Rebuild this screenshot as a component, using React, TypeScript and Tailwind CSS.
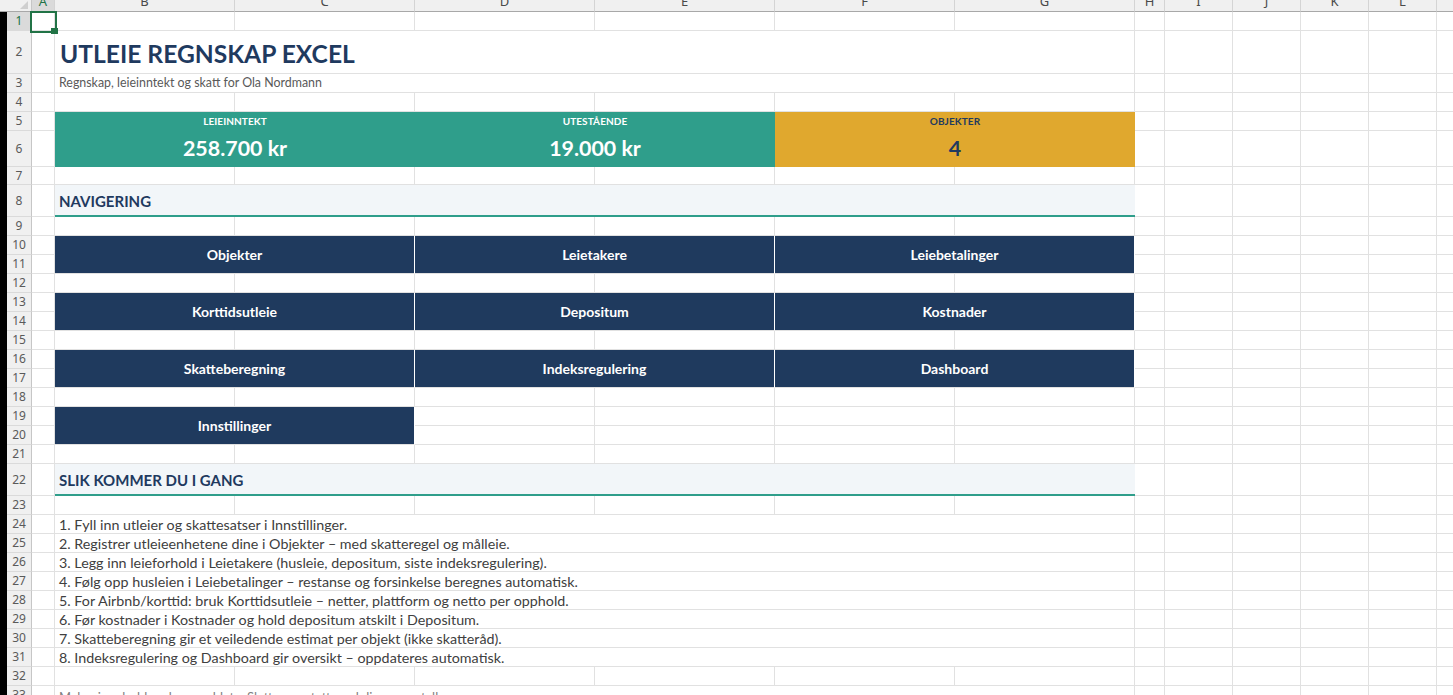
import React from "react";

const FONT = "font-['Lato','Open_Sans',sans-serif]";
const GRID = "border-r border-b border-[#e1e1e1]";
const COLS = ["A", "B", "C", "D", "E", "F", "G", "H", "I", "J", "K", "L", "M"];

function RowHdr({ n, sel }: { n: number; sel?: boolean }) {
  return (
    <div
      className={`${
        sel ? "bg-[#dadada] text-[#217346]" : "bg-[#f0f0f0] text-[#5a5a5a]"
      } border-r border-r-[#c6c6c6] border-b border-b-[#dadada] flex items-center justify-center text-[12px] font-['Noto_Sans',sans-serif]`}
    >
      {n}
    </div>
  );
}

function Blank() {
  return <div className={GRID} />;
}

function Right() {
  return (
    <>
      <Blank />
      <Blank />
      <Blank />
      <Blank />
      <Blank />
      <Blank />
    </>
  );
}

function BtoG() {
  return (
    <>
      <Blank />
      <Blank />
      <Blank />
      <Blank />
      <Blank />
      <Blank />
    </>
  );
}

function NormalRow({ n }: { n: number }) {
  return (
    <>
      <RowHdr n={n} />
      <Blank />
      <BtoG />
      <Right />
    </>
  );
}

function Kpi({
  label,
  value,
  gold,
}: {
  label: string;
  value: string;
  gold?: boolean;
}) {
  return (
    <div
      className={`col-span-2 row-span-2 flex flex-col items-center ${
        gold ? "bg-[#e0a82e] text-[#1f3a5f]" : "bg-[#2f9e8b] text-white"
      }`}
    >
      <div className="h-[19px] flex items-center text-[10px] font-bold tracking-[0.1px]">
        {label}
      </div>
      <div className="flex-1 flex items-center text-[21.4px] font-bold pb-[1px]">
        {value}
      </div>
    </div>
  );
}

function NavBtn({ label }: { label: string }) {
  return (
    <div className="col-span-2 row-span-2 bg-[#1f3a5e] border-r border-r-white border-b border-b-[#e1e1e1] flex items-center justify-center text-white text-[14px] font-bold">
      {label}
    </div>
  );
}

function Section({ label }: { label: string }) {
  return (
    <div className="col-span-6 bg-[#f2f6f9] border-b-2 border-b-[#2f9e8b] flex items-center pl-[4px] pt-[3px] text-[15px] font-bold text-[#1f3a5f]">
      {label}
    </div>
  );
}

function TextRow({ n, text }: { n: number; text: string }) {
  return (
    <>
      <RowHdr n={n} />
      <Blank />
      <div
        className={`col-span-6 ${GRID} flex items-center pl-[4px] pt-[1px] text-[14.3px] text-[#404040] whitespace-nowrap`}
      >
        {text}
      </div>
      <Right />
    </>
  );
}

const steps = [
  "1. Fyll inn utleier og skattesatser i Innstillinger.",
  "2. Registrer utleieenhetene dine i Objekter – med skatteregel og målleie.",
  "3. Legg inn leieforhold i Leietakere (husleie, depositum, siste indeksregulering).",
  "4. Følg opp husleien i Leiebetalinger – restanse og forsinkelse beregnes automatisk.",
  "5. For Airbnb/korttid: bruk Korttidsutleie – netter, plattform og netto per opphold.",
  "6. Før kostnader i Kostnader og hold depositum atskilt i Depositum.",
  "7. Skatteberegning gir et veiledende estimat per objekt (ikke skatteråd).",
  "8. Indeksregulering og Dashboard gir oversikt – oppdateres automatisk.",
];

export default function App() {
  return (
    <div className={`w-[1453px] h-[695px] overflow-hidden bg-white ${FONT}`}>
      <div className="grid grid-cols-[7px_25px_23px_180px_180px_180px_180px_180px_180px_30px_68px_68px_68px_68px_68px] grid-rows-[12px_19px_43px_19px_19px_19px_36px_18px_32px_repeat(13,19px)_32px_repeat(11,19px)]">
        {/* header row */}
        <div className="col-span-2 bg-[#f0f0f0] border-r border-r-[#c6c6c6] border-b border-b-[#a8a8a8] relative">
          <svg
            className="absolute right-[3px] bottom-[2px]"
            width="8"
            height="8"
            viewBox="0 0 8 8"
          >
            <polygon points="8,0 8,8 0,8" fill="#cfcfcf" />
          </svg>
        </div>
        {COLS.map((c, i) => (
          <div
            key={c}
            className={`${
              i === 0 ? "bg-[#dadada] text-[#217346]" : "bg-[#f0f0f0] text-[#4a4a4a]"
            } border-r border-r-[#d4d4d4] border-b border-b-[#a8a8a8] flex justify-center overflow-hidden font-['Noto_Sans',sans-serif]`}
          >
            <span className="block text-[13px] leading-[13px] -mt-[5px]">{c}</span>
          </div>
        ))}

        {/* row 1 */}
        <div className="bg-black row-span-[33]" />
        <RowHdr n={1} sel />
        <div className={`${GRID} relative`}>
          <div className="absolute -left-[2px] -top-[1px] w-[27px] h-[22px] border-2 border-[#217346]" />
          <div className="absolute left-[19px] top-[16px] w-[7px] h-[6px] bg-[#217346]" />
        </div>
        <BtoG />
        <Right />

        {/* row 2 */}
        <RowHdr n={2} />
        <Blank />
        <div
          className={`col-span-6 ${GRID} flex items-end pl-[5px] pb-[6px] text-[24.6px] leading-none font-bold text-[#1f3a5f]`}
        >
          UTLEIE REGNSKAP EXCEL
        </div>
        <Right />

        {/* row 3 */}
        <RowHdr n={3} />
        <Blank />
        <div
          className={`col-span-6 ${GRID} flex items-center pl-[4px] text-[12.4px] text-[#595959]`}
        >
          Regnskap, leieinntekt og skatt for Ola Nordmann
        </div>
        <Right />

        <NormalRow n={4} />

        {/* row 5-6 KPIs */}
        <RowHdr n={5} />
        <Blank />
        <Kpi label="LEIEINNTEKT" value="258.700 kr" />
        <Kpi label="UTESTÅENDE" value="19.000 kr" />
        <Kpi label="OBJEKTER" value="4" gold />
        <Right />
        <RowHdr n={6} />
        <Blank />
        <Right />

        <NormalRow n={7} />

        {/* row 8 */}
        <RowHdr n={8} />
        <Blank />
        <Section label="NAVIGERING" />
        <Right />

        <NormalRow n={9} />

        {/* rows 10-11 */}
        <RowHdr n={10} />
        <Blank />
        <NavBtn label="Objekter" />
        <NavBtn label="Leietakere" />
        <NavBtn label="Leiebetalinger" />
        <Right />
        <RowHdr n={11} />
        <Blank />
        <Right />

        <NormalRow n={12} />

        {/* rows 13-14 */}
        <RowHdr n={13} />
        <Blank />
        <NavBtn label="Korttidsutleie" />
        <NavBtn label="Depositum" />
        <NavBtn label="Kostnader" />
        <Right />
        <RowHdr n={14} />
        <Blank />
        <Right />

        <NormalRow n={15} />

        {/* rows 16-17 */}
        <RowHdr n={16} />
        <Blank />
        <NavBtn label="Skatteberegning" />
        <NavBtn label="Indeksregulering" />
        <NavBtn label="Dashboard" />
        <Right />
        <RowHdr n={17} />
        <Blank />
        <Right />

        <NormalRow n={18} />

        {/* rows 19-20 */}
        <RowHdr n={19} />
        <Blank />
        <NavBtn label="Innstillinger" />
        <Blank />
        <Blank />
        <Blank />
        <Blank />
        <Right />
        <RowHdr n={20} />
        <Blank />
        <Blank />
        <Blank />
        <Blank />
        <Blank />
        <Right />

        <NormalRow n={21} />

        {/* row 22 */}
        <RowHdr n={22} />
        <Blank />
        <Section label="SLIK KOMMER DU I GANG" />
        <Right />

        <NormalRow n={23} />

        {steps.map((s, i) => (
          <TextRow key={i} n={24 + i} text={s} />
        ))}

        <NormalRow n={32} />

        {/* row 33 */}
        <RowHdr n={33} />
        <Blank />
        <div
          className={`col-span-6 ${GRID} flex items-start pl-[4px] pt-[2px] text-[13px] text-[#7f7f7f] whitespace-nowrap`}
        >
          Malen inneholder eksempeldata. Slett og erstatt med dine egne tall.
        </div>
        <Right />
      </div>
    </div>
  );
}
